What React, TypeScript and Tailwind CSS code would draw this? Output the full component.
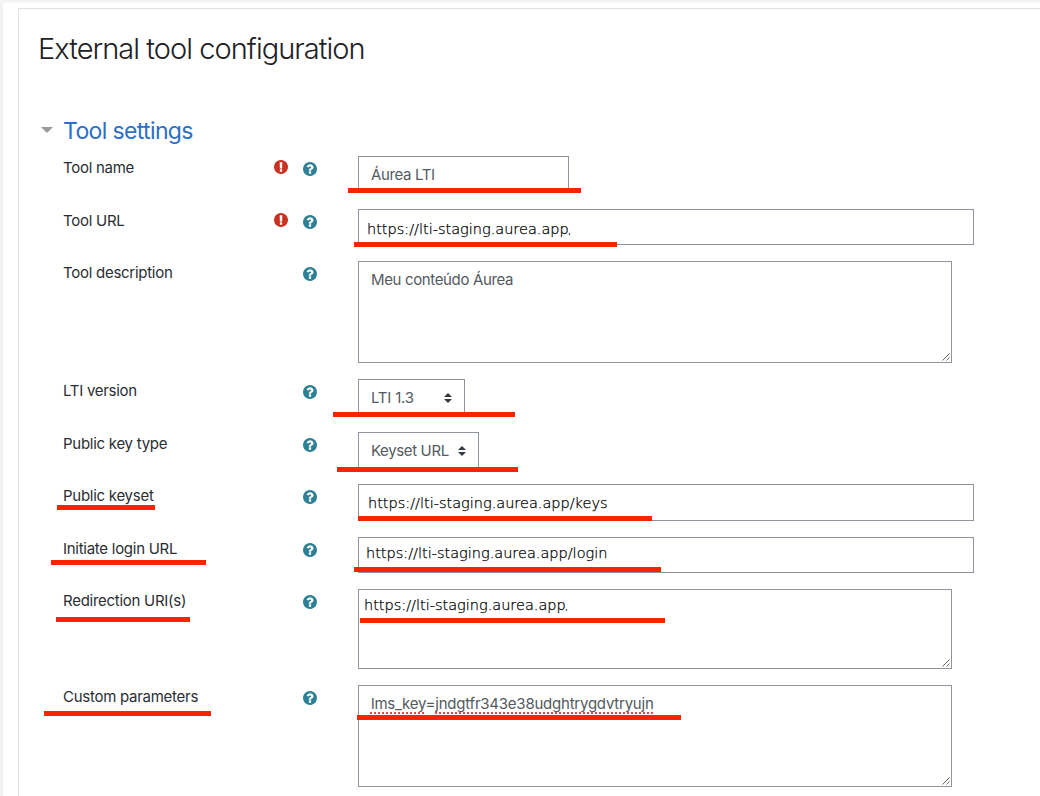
import React from "react";

const sans = "font-['Inter','Liberation_Sans',sans-serif]";

function RequiredIcon() {
  return (
    <svg className="h-[14px] w-[14px] fill-[#ca3120]" viewBox="128 128 1536 1536">
      <path d="M896 128q209 0 385.500 103t279.500 279.500 103 385.500-103 385.500-279.500 279.500-385.500 103-385.500-103-279.500-279.500-103-385.500 103-385.500 279.500-279.500 385.500-103zm128 1247v-190q0-14-9-23.500t-22-9.500h-192q-13 0-23 10t-10 23v190q0 13 10 23t23 10h192q13 0 22-9.500t9-23.500zm-2-344l18-621q0-12-10-18-10-8-24-8h-220q-14 0-24 8-10 6-10 18l17 621q0 10 10 17.500t24 7.500h185q14 0 23.500-7.500t10.500-17.500z" />
    </svg>
  );
}

function HelpIcon() {
  return (
    <svg className="h-[14px] w-[14px] fill-[#2c8196]" viewBox="128 128 1536 1536">
      <path d="M1024 1376v-192q0-14-9-23t-23-9h-192q-14 0-23 9t-9 23v192q0 14 9 23t23 9h192q14 0 23-9t9-23zm256-672q0-88-55.500-163t-138.500-116-170-41q-243 0-371 213-15 24 8 42l132 100q7 6 19 6 16 0 25-12 53-68 86-92 34-24 86-24 48 0 85.500 26t37.500 59q0 38-20 61t-68 45q-63 28-115.500 86.500t-52.500 125.500v36q0 14 9 23t23 9h192q14 0 23-9t9-23q0-19 21.500-49.500t54.500-49.500q32-18 49-28.500t46-35 44.500-48 28-60.500 12.500-81zm384 192q0 209-103 385.500t-279.500 279.500-385.500 103-385.500-103-279.500-279.500-103-385.500 103-385.500 279.500-279.500 385.500-103 385.500 103 279.500 279.500 103 385.500z" />
    </svg>
  );
}

function UpDown() {
  return (
    <svg className="h-[10px] w-[8px] shrink-0 fill-[#343a40]" viewBox="0 0 8 10">
      <path d="M4 0l4 4H0zM4 10L0 6h8z" />
    </svg>
  );
}

function Grip() {
  return (
    <svg className="absolute right-[1px] bottom-[1px] h-[8px] w-[8px]" viewBox="0 0 8 8" stroke="#555" strokeWidth="0.9">
      <path d="M0.500 7.500L7.500 0.500M4.500 7.500L7.500 4.500" />
    </svg>
  );
}

/* Red marker stroke laid over a row */
function Mark({ className }: { className: string }) {
  return <span className={`absolute h-[5px] bg-[#f62500] ${className}`} />;
}

type RowProps = {
  label: string;
  required?: boolean;
  height: string;
  marks?: string[];
  children: React.ReactNode;
};

function Row({ label, required, height, marks = [], children }: RowProps) {
  return (
    <div className={`relative flex items-start ${height}`}>
      <div className={`w-[211.400px] pt-[2px] text-[15px] leading-5 tracking-[-0.270px] whitespace-nowrap text-[#2a2e33] ${sans}`}>
        {label}
      </div>
      <div className="w-[29px] pt-[4px]">{required && <RequiredIcon />}</div>
      <div className="w-[54.600px] pt-[6px]">
        <HelpIcon />
      </div>
      {children}
      {marks.map((m) => (
        <Mark key={m} className={m} />
      ))}
    </div>
  );
}

const box = "relative border border-[#8f959e] bg-white whitespace-nowrap";
const value = `text-[15px] leading-5 text-[#535a61] tracking-[-0.360px] ${sans}`;
const url = "text-[14.500px] leading-5 text-black font-extralight [-webkit-text-stroke:0.25px_black] font-['DejaVu_Sans',sans-serif]";
const misspelled = "underline decoration-dotted decoration-[1.5px] decoration-[#f04545] underline-offset-[3px] [text-decoration-skip-ink:none]";

export default function App() {
  return (
    <div className="flex h-[796px] w-[1040px] overflow-hidden border-l-[3px] border-[#f2f2f2] bg-white">
      <div className="flex w-full flex-col">
        <div className="h-[8px] bg-linear-to-b from-[#f0f0f0] to-white to-50%" />
        <main className="ml-[15px] flex-1 border-t border-l border-[#dee2e6] pl-[20px]">
          <h1 className={`-ml-px pt-[20px] text-[29px] leading-[40px] font-light tracking-[-0.960px] whitespace-nowrap text-[#1d2125] ${sans}`}>
            External tool configuration
          </h1>
          <div className="flex h-[87px] items-end pb-[9px]">
            <svg className="mb-[14px] ml-[2px] h-[6px] w-[12px] fill-[#999]" viewBox="0 0 12 6">
              <path d="M0 0h12L6 6z" />
            </svg>
            <h2 className={`ml-[10px] text-[23px] leading-[32px] tracking-[-0.640px] whitespace-nowrap text-[#2c6fc7] ${sans}`}>
              Tool settings
            </h2>
          </div>
          <div className="pl-[24px]">
            <Row label="Tool name" required height="h-[53px]" marks={["left-[285px] top-[32px] w-[233px]"]}>
              <div className={`${box} h-[36px] w-[211px] pt-[8px] pl-[12px] ${value}`}>Áurea LTI</div>
            </Row>
            <Row label="Tool URL" required height="h-[52px]" marks={["left-[291px] top-[33px] w-[263px]"]}>
              <div className={`${box} h-[36px] w-[616px] pt-[9px] pl-[8px] ${url}`}>https://lti-staging.aurea.app<span className="-ml-px text-[11px]">,</span></div>
            </Row>
            <Row label="Tool description" height="h-[118px]">
              <div className={`${box} h-[102px] w-[594px] pt-[8px] pl-[12px] ${value}`}>Meu conteúdo Áurea<Grip /></div>
            </Row>
            <Row label="LTI version" height="h-[53px]" marks={["left-[270px] top-[33px] w-[182px]"]}>
              <div className={`${box} flex h-[36px] w-[107px] items-center justify-between pt-[2px] pr-[12px] pl-[12px] ${value}`}><span className="tracking-[-0.200px]">LTI 1.3</span><UpDown /></div>
            </Row>
            <Row label="Public key type" height="h-[52px]" marks={["left-[274px] top-[35px] w-[181px]"]}>
              <div className={`${box} flex h-[36px] w-[121px] items-center justify-between pt-[2px] pr-[12px] pl-[12px] ${value}`}>Keyset URL<UpDown /></div>
            </Row>
            <Row label="Public keyset" height="h-[53px]" marks={["left-[-6px] top-[21px] w-[98px]", "left-[295px] top-[32px] w-[294px]"]}>
              <div className={`${box} h-[37px] w-[616px] pt-[8px] pl-[9px] ${url}`}>https://lti-staging.aurea.app/keys</div>
            </Row>
            <Row label="Initiate login URL" height="h-[52px]" marks={["left-[-12px] top-[23px] w-[155px]", "left-[291px] top-[30px] w-[307px]"]}>
              <div className={`${box} h-[36px] w-[616px] pt-[5px] pl-[7px] ${url}`}>https://lti-staging.aurea.app/login</div>
            </Row>
            <Row label="Redirection URI(s)" height="h-[96px]" marks={["left-[-7px] top-[28px] w-[134px]", "left-[297px] top-[29px] w-[305px]"]}>
              <div className={`${box} h-[80px] w-[594px] pt-[5px] pl-[5px] ${url}`}>https://lti-staging.aurea.app<span className="-ml-px text-[11px]">,</span><Grip /></div>
            </Row>
            <Row label="Custom parameters" height="h-[111px]" marks={["left-[-19px] top-[26px] w-[167px]", "left-[294px] top-[30px] w-[324px]"]}>
              <div className={`${box} h-[102px] w-[594px] pt-[8px] pl-[12px] ${value}`}>
                <span className="tracking-[-0.230px]">
                  <span className={misspelled}>lms_key</span>=<span className={misspelled}>jndgtfr343e38udghtrygdvtryujn</span>
                </span>
                <Grip />
              </div>
            </Row>
          </div>
        </main>
      </div>
    </div>
  );
}
